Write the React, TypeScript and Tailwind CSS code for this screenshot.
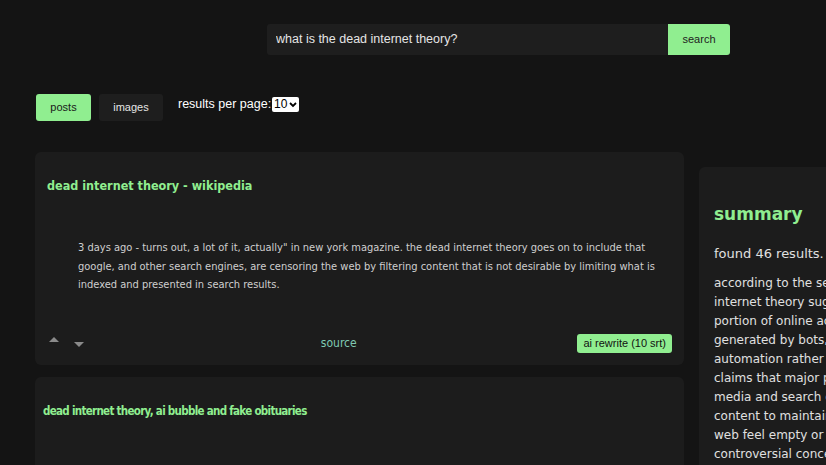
import { useState } from 'react'

const results = [
  {
    id: 1,
    title: 'dead internet theory - wikipedia',
    titleClass: 'text-[12.5px] pl-3',
    snippet:
      '3 days ago - turns out, a lot of it, actually" in new york magazine. the dead internet theory goes on to include that google, and other search engines, are censoring the web by filtering content that is not desirable by limiting what is indexed and presented in search results.',
  },
  {
    id: 2,
    title: 'dead internet theory, ai bubble and fake obituaries',
    titleClass: 'text-[11.5px] tracking-[-0.7px] pl-[8px]',
    snippet:
      'the dead internet theory claims that most of the content online is produced by bots and automated accounts rather than real people.',
  },
]

const summaryText = `according to the search results, the dead
internet theory suggests that a significant
portion of online activity and content is
generated by bots, ai, and
automation rather than humans. it also
claims that major platforms like social
media and search engines manipulate
content to maintain control, making the
web feel empty or repetitive. it remains a
controversial concept.`

function ResultCard({ title, titleClass, snippet }: { title: string; titleClass: string; snippet: string }) {
  return (
    <div className="bg-[#1c1c1c] rounded-md pr-3 pt-[24px] pb-3">
      <h3 className={`font-bold text-[#90ee90] font-['DejaVu_Sans_Condensed',sans-serif] leading-5 ${titleClass}`}>
        {title}
      </h3>
      <p className="mt-[43px] ml-[43px] mr-[16px] text-[11px] leading-[18.5px] text-[#cfcfcf] font-['DejaVu_Sans_Condensed',sans-serif]">
        {snippet}
      </p>
      <div className="mt-[39px] pl-3 flex items-center justify-between">
        <div className="flex items-start gap-[15px] pl-[2px]">
          <span className="block w-0 h-0 border-x-[5px] border-x-transparent border-b-[5px] border-b-[#8a8a8a] mt-[-3px]" />
          <span className="block w-0 h-0 border-x-[5px] border-x-transparent border-t-[5px] border-t-[#8a8a8a] mt-[2px]" />
        </div>
        <a className="text-[12px] text-[#7fc9b3] font-['DejaVu_Sans_Condensed',sans-serif] ml-[16px]">source</a>
        <button className="bg-[#90ee90] text-[#111] text-[11px] font-['Liberation_Sans',sans-serif] rounded-[3px] px-[6px] h-[19px]">
          ai rewrite (10 srt)
        </button>
      </div>
    </div>
  )
}

export default function App() {
  const [perPage, setPerPage] = useState('10')
  return (
    <div className="min-h-screen w-full overflow-hidden bg-[#141414] font-['Liberation_Sans',sans-serif]">
      {/* Search bar */}
      <div className="flex justify-center pt-6 pl-[171px]">
        <div className="flex h-[31px] w-[463px] rounded-[3px] overflow-hidden">
          <input
            className="flex-1 bg-[#1e1e1e] text-[#e5e5e5] text-[12.5px] px-[9px] outline-none"
            defaultValue="what is the dead internet theory?"
          />
          <button className="w-[62px] bg-[#90ee90] text-[#222] text-[11px]">search</button>
        </div>
      </div>

      {/* Tabs */}
      <div className="flex items-center mt-[39px] ml-9 gap-2">
        <button className="w-[55px] h-[27px] rounded-[3px] bg-[#90ee90] text-[#1a1a1a] text-[11px]">posts</button>
        <button className="w-[64px] h-[27px] rounded-[3px] bg-[#1e1e1e] text-[#e5e5e5] text-[11px]">images</button>
        <label className="ml-[7px] mb-[6px] flex items-center text-[12.5px] text-white">
          results per page:
          <span className="relative ml-[1px] flex items-center">
            <select
              value={perPage}
              onChange={(e) => setPerPage(e.target.value)}
              className="appearance-none w-[27px] h-[15px] bg-white text-black text-[12px] leading-[15px] pl-[2px] rounded-[2px] outline-none"
            >
              <option>10</option>
              <option>20</option>
              <option>50</option>
            </select>
            <svg className="pointer-events-none absolute right-[2px] top-[5px]" width="8" height="6" viewBox="0 0 8 6">
              <path d="M1 1l3 3 3-3" fill="none" stroke="#000" strokeWidth="1.8" />
            </svg>
          </span>
        </label>
      </div>

      {/* Results + summary */}
      <div className="flex items-start gap-[15px] ml-[35px] mt-[31px]">
        <div className="w-[649px] shrink-0 flex flex-col gap-3">
          {results.map((r) => (
            <ResultCard key={r.id} title={r.title} titleClass={r.titleClass} snippet={r.snippet} />
          ))}
        </div>
        <aside className="w-[360px] shrink-0 mt-[15px] bg-[#1c1c1c] rounded-md px-[15px] pt-[35px] pb-6 font-['DejaVu_Sans',sans-serif]">
          <h2 className="text-[17px] font-bold text-[#90ee90] leading-6">summary</h2>
          <p className="mt-[18px] text-[13px] text-[#e0e0e0]">found 46 results.</p>
          <p className="mt-[10px] whitespace-pre-line text-[12px] leading-[19px] text-[#e0e0e0]">{summaryText}</p>
        </aside>
      </div>
    </div>
  )
}
